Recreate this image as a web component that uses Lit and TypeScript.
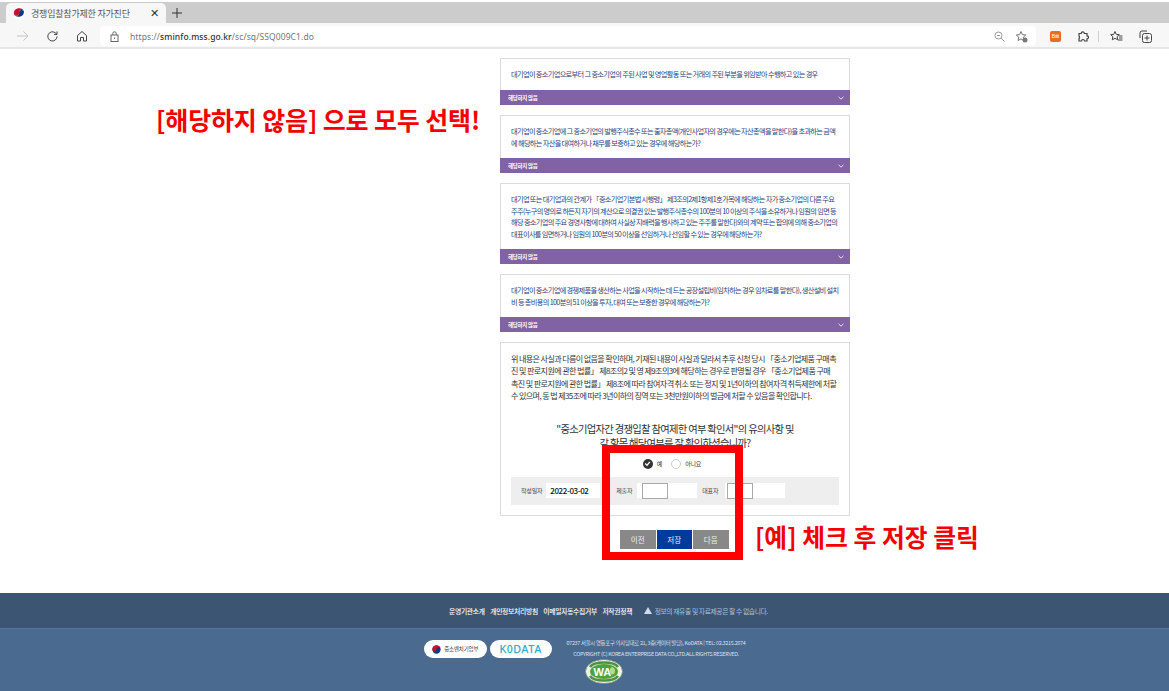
import { LitElement, html, css, svg } from "lit";
import { customElement } from "lit/decorators.js";

const QUESTIONS = [
  { lines: ["대기업이 중소기업으로부터 그 중소기업의 주된 사업 및 영업활동 또는 거래의 주된 부분을 위임받아 수행하고 있는 경우"], h: 31 },
  { lines: ["대기업이 중소기업에 그 중소기업의 발행주식총수 또는 출자총액(개인사업자의 경우에는 자산총액을 말한다)을 초과하는 금액", "에 해당하는 자산을 대여하거나 채무를 보증하고 있는 경우에 해당하는가?"], h: 42 },
  { lines: ["대기업 또는 대기업과의 관계가 「중소기업기본법 시행령」 제3조의2제1항제1호가목에 해당하는 자가 중소기업의 다른 주요", "주주(누구의 명의로 하든지 자기의 계산으로 의결권 있는 발행주식총수의 100분의 10 이상의 주식을 소유하거나 임원의 임면 등", "해당 중소기업의 주요 경영사항에 대하여 사실상 지배력을 행사하고 있는 주주를 말한다)와의 계약 또는 합의에 의해 중소기업의", "대표이사를 임면하거나 임원의 100분의 50 이상을 선임하거나 선임할 수 있는 경우에 해당하는가?"], h: 65 },
  { lines: ["대기업이 중소기업에 경쟁제품을 생산하는 사업을 시작하는 데 드는 공장설립비(임차하는 경우 임차료를 말한다), 생산설비 설치", "비 등 총비용의 100분의 51 이상을 투자, 대여 또는 보증한 경우에 해당하는가?"], h: 42 },
];

const NOTICE = [
  "위 내용은 사실과 다름이 없음을 확인하며, 기재된 내용이 사실과 달라서 추후 신청 당시 「중소기업제품 구매촉",
  "진 및 판로지원에 관한 법률」 제8조의2 및 영 제9조의3에 해당하는 경우로 판명될 경우 「중소기업제품 구매",
  "촉진 및 판로지원에 관한 법률」 제8조에 따라 참여자격 취소 또는 정지 및 1년이하의 참여자격 취득제한에 처할",
  "수 있으며, 동 법 제35조에 따라 3년이하의 징역 또는 3천만원이하의 벌금에 처할 수 있음을 확인합니다.",
];

const ico = (w: number, h: number, body: unknown) =>
  html`<svg width=${w} height=${h} viewBox="0 0 ${w} ${h}" fill="none" stroke="#444" stroke-width="1">${body}</svg>`;

@customElement("browser-bar")
class BrowserBar extends LitElement {
  static styles = css`
    :host { display: block; font-family: "Noto Sans CJK KR", "Noto Sans", sans-serif; }
    .strip { height: 21px; margin-top: 2px; background: #cccccc; display: flex; align-items: flex-end; padding-left: 6px; }
    .tab { width: 160px; height: 20px; background: #f7f7f7; border-radius: 5px 5px 0 0; display: flex; align-items: center; box-sizing: border-box; padding: 0 7px; }
    .title { flex: 1; margin-left: 6px; font-size: 9px; letter-spacing: -0.2px; color: #555; white-space: nowrap; }
    .close { font: 11px "Liberation Sans", sans-serif; color: #333; }
    .plus { width: 22px; height: 20px; display: flex; align-items: center; justify-content: center; }
    .tools { height: 26px; padding-top: 2px; box-sizing: border-box; background: #f7f7f7; border-bottom: 2px solid #e6e6e6; display: flex; align-items: center; }
    .nav { display: flex; align-items: center; width: 100px; padding-left: 16px; box-sizing: border-box; gap: 17px; }
    .addr { width: 936px; height: 20px; background: #fff; border-radius: 4px; display: flex; align-items: center; box-sizing: border-box; padding: 0 8px 0 10px; }
    .url { margin-left: 11px; flex: 1; font: 8.5px "Noto Sans", sans-serif; color: #777; letter-spacing: 0.1px; white-space: nowrap; }
    .url b { font-weight: 500; color: #333; }
    .right { display: flex; align-items: center; }
    .ext { width: 11px; height: 11px; background: #ef6c1e; border-radius: 2px; margin: 0 0 0 14px; color: #fff; font: 5px "Liberation Sans", sans-serif; display: flex; align-items: center; justify-content: center; }
    .sep { width: 1px; height: 11px; background: #cfcfcf; margin: 0 11px 0 9px; }
    .g16 { width: 16px; }
    .g10 { width: 10px; }
  `;
  render() {
    return html`
      <div class="strip">
        <div class="tab">
          ${ico(12, 12, svg`<circle cx="6" cy="6" r="6" fill="#fff" stroke="none"/><path d="M.8 6.500A5.300 5.300 0 0 1 11 4.500 2.600 2.600 0 0 0 6 5.500 2.600 2.600 0 0 1 .8 6.500Z" fill="#c8102e" stroke="none"/><path d="M.8 6.500A2.600 2.600 0 0 0 6 5.500 2.600 2.600 0 0 1 11 4.500 5.300 5.300 0 0 1 .8 6.500Z" fill="#0b3a82" stroke="none"/>`)}
          <span class="title">경쟁입찰참가제한 자가진단</span>
          <span class="close">✕</span>
        </div>
        <div class="plus">${ico(12, 12, svg`<path d="M6 1v10M1 6h10" stroke="#333"/>`)}</div>
      </div>
      <div class="tools">
        <div class="nav">
          ${ico(13, 12, svg`<path d="M1 6h11M7.500 1.500 12 6l-4.500 4.500" stroke="#c4c4c4"/>`)}
          ${ico(13, 13, svg`<path d="M11 6.500A4.600 4.600 0 1 1 9.500 3L11 4.400M11 1.400v3H8" stroke="#444"/>`)}
          ${ico(12, 12, svg`<path d="M1.500 5.500 6 1.500l4.500 4V11H7.500V7.500h-3V11h-3Z" stroke="#444"/>`)}
        </div>
        <div class="addr">
          ${ico(9, 11, svg`<rect x="1" y="4" width="7" height="6.500" stroke="#666"/><path d="M2.800 4V2.500a1.700 1.700 0 0 1 3.400 0V4M4.500 6.500v1.500" stroke="#666"/>`)}
          <span class="url">https://<b>sminfo.mss.go.kr</b>/sc/sq/SSQ009C1.do</span>
          <div class="right">
            ${ico(11, 11, svg`<circle cx="4.500" cy="4.500" r="3.500" stroke="#999"/><path d="M7 7l3.500 3.500M3 4.500h3" stroke="#999"/>`)}
            <span class="g10"></span>
            ${ico(13, 13, svg`<path d="M6 1.500 7.400 4.600l3.300.4-2.400 2.200.6 3.300L6 8.900l-2.900 1.600.6-3.300L1.300 5l3.300-.4Z" stroke="#555" stroke-width=".8"/><circle cx="10" cy="10" r="2.500" fill="#777" stroke="none"/>`)}
          </div>
        </div>
        <div class="right">
          <span class="ext">B⊠</span>
          <span class="g16"></span>
          ${ico(12, 12, svg`<path d="M2 3.500h2.200a1.600 1.600 0 0 1 3.200 0H10v2.300a1.500 1.500 0 0 1 0 3V11H7.500a1.500 1.500 0 0 0-3 0H2V8.500a1.700 1.700 0 0 0 0-2.500Z" stroke="#444" stroke-width="1.200"/>`)}
          <span class="sep"></span>
          ${ico(13, 12, svg`<path d="M5 1.500 6.300 4.400l3 .3-2.200 2 .6 3.100L5 8.300 2.300 9.800l.6-3.100-2.200-2 3-.3Z" stroke="#444"/><path d="M9 6h3.500M9 8h3.500M8 10h4.500" stroke="#444"/>`)}
          <span class="g16"></span>
          ${ico(13, 13, svg`<rect x="3.500" y="3.500" width="9" height="9" rx="2" stroke="#444"/><path d="M1 8V3a2 2 0 0 1 2-2h5M8 5.500v5M5.500 8h5" stroke="#444"/>`)}
        </div>
      </div>
    `;
  }
}

@customElement("app-root")
class AppRoot extends LitElement {
  static styles = css`
    :host { display: block; position: relative; width: 100%; height: 691px; overflow: hidden; background: #fff; font-family: "Noto Sans CJK KR", "Noto Sans", sans-serif; }
    .main { width: 350px; height: 544px; margin-left: 500px; padding-top: 9px; box-sizing: border-box; display: flex; flex-direction: column; gap: 10px; }
    .card { border: 1px solid #dcdcdc; box-sizing: border-box; background: #fff; }
    .q { box-sizing: border-box; padding: 10px 10px 0; font-size: 7.2px; line-height: 11.5px; letter-spacing: -0.65px; color: #1f3f7a; white-space: nowrap; }
    .sel { height: 15px; margin: 0 -1px -1px; background: #8163a5; color: #fff; font-size: 5.5px; font-weight: 700; letter-spacing: -0.3px; display: flex; align-items: center; justify-content: space-between; padding: 0 6px 0 8px; }
    .decl { flex: none; height: 174px; padding: 10px 10px 0; }
    .notice { font-size: 8.1px; line-height: 12.4px; letter-spacing: -0.64px; color: #333; white-space: nowrap; margin: 0; }
    h2 { margin: 19px 0 0; font-size: 10.3px; line-height: 14px; font-weight: 400; color: #333; text-align: center; letter-spacing: -0.7px; white-space: nowrap; }
    .radios { display: flex; justify-content: center; align-items: center; height: 14px; margin-top: 7px; font-size: 6px; letter-spacing: -0.2px; color: #333; gap: 4px; padding-right: 6px; }
    .dot { width: 10px; height: 10px; border-radius: 50%; box-sizing: border-box; display: flex; align-items: center; justify-content: center; }
    .dot.on { background: #333; }
    .dot.off { border: 1px solid #ccc; margin-left: 5px; }
    .form { height: 28px; margin-top: 6px; background: #eeeeee; display: flex; align-items: center; padding-left: 10px; font-size: 6px; color: #444; letter-spacing: -0.2px; }
    .f { height: 15px; background: #fff; box-sizing: border-box; display: flex; align-items: center; }
    .date { width: 54px; margin-left: 4px; padding-left: 4px; font-size: 8px; font-weight: 500; color: #111; letter-spacing: -0.4px; margin-right: 16px; }
    .who { width: 60px; margin: 0 5px; padding-left: 5px; }
    .who.b { margin: 0 0 0 7px; padding-left: 2px; }
    .inner { width: 26px; height: 16px; border: 1px solid #a9a9a9; box-sizing: border-box; background: #fff; }
    .btns { display: flex; gap: 1px; margin: 4px 0 0 120px; }
    .btn { width: 35.500px; height: 19px; background: #888; color: #eee; font-size: 7.500px; display: flex; align-items: center; justify-content: center; letter-spacing: 0.2px; }
    .btn.save { background: #003a9c; }
    .foot1 { height: 35px; background: #3b5573; display: flex; align-items: center; padding-left: 449px; color: #fff; font-size: 6.800px; font-weight: 500; letter-spacing: -0.3px; box-sizing: border-box; }
    .foot1 a { margin-right: 5.500px; white-space: nowrap; }
    .warn { margin-left: 6px; display: flex; align-items: center; gap: 3px; color: #a4c2dc; font-weight: 400; letter-spacing: -0.42px; }
    .foot2 { height: 63px; background: #4b6a90; border-top: 1px solid #57749a; box-sizing: border-box; padding: 11px 0 0 424px; }
    .row { display: flex; gap: 3px; align-items: flex-start; height: 18px; }
    .pill { width: 62.500px; height: 18px; border-radius: 9px; background: #fff; display: flex; align-items: center; justify-content: center; gap: 3px; font-size: 5.500px; letter-spacing: -0.2px; color: #444; }
    .kd { color: #2aa9c8; font: 400 10px "Liberation Sans", sans-serif; letter-spacing: 0.8px; -webkit-text-stroke: 0.25px #2aa9c8; }
    .addr { width: 190px; margin-left: 6px; margin-top: -2px; color: #d5e0ec; font-size: 5.400px; line-height: 10.500px; text-align: center; letter-spacing: -0.28px; white-space: nowrap; }
    .wa { display: block; margin-left: 161px; }
    .note { position: absolute; color: #f40000; font-weight: 700; white-space: nowrap; margin: 0; }
    .n1 { left: 156px; top: 102px; font-size: 25px; line-height: 34px; letter-spacing: -0.15px; }
    .n2 { left: 755px; top: 519px; font-size: 24.800px; line-height: 34px; }
    .box { position: absolute; left: 602px; top: 445px; width: 141px; height: 115px; border: 8px solid #ff0000; box-sizing: border-box; }
  `;
  render() {
    return html`
      <browser-bar></browser-bar>
      <div class="main">
        ${QUESTIONS.map((q) => html`
          <div class="card">
            <div class="q" style="height:${q.h}px">${q.lines.map((l) => html`${l}<br>`)}</div>
            <div class="sel"><span>해당하지 않음</span>
              <svg width="6" height="4" viewBox="0 0 6 4" fill="none" stroke="#e8e0f0" stroke-width="1"><path d="M.5.800 3 3.200 5.500.800"/></svg>
            </div>
          </div>`)}
        <div class="card decl">
          <p class="notice">${NOTICE.map((l) => html`${l}<br>`)}</p>
          <h2>"중소기업자간 경쟁입찰 참여제한 여부 확인서"의 유의사항 및<br>각 항목 해당여부를 잘 확인하셨습니까?</h2>
          <div class="radios">
            <span class="dot on"><svg width="7" height="7" viewBox="0 0 7 7" fill="none" stroke="#fff" stroke-width="1.300"><path d="M1.200 3.500 3 5.200 5.900 1.800"/></svg></span><span>예</span>
            <span class="dot off"></span><span>아니요</span>
          </div>
          <div class="form">
            <span>작성일자</span>
            <div class="f date">2022-03-02</div>
            <span>제출자</span>
            <div class="f who"><div class="inner"></div></div>
            <span>대표자</span>
            <div class="f who b"><div class="inner"></div></div>
          </div>
        </div>
        <div class="btns">
          <div class="btn">이전</div><div class="btn save">저장</div><div class="btn">다음</div>
        </div>
      </div>
      <div class="foot1">
        <a>운영기관소개</a><a>개인정보처리방침</a><a>이메일자동수집거부</a><a>저작권정책</a>
        <span class="warn"><svg width="8" height="7" viewBox="0 0 8 7"><path d="M4 0 8 7H0Z" fill="#cfdbe6"/></svg>정보의 재유출 및 자료제공은 할 수 없습니다.</span>
      </div>
      <div class="foot2">
        <div class="row">
          <div class="pill">
            <svg width="9" height="9" viewBox="0 0 12 12"><circle cx="6" cy="6" r="5.500" fill="#0b3a82"/><path d="M.5 6.500A5.500 5.500 0 0 1 11.500 5 2.800 2.800 0 0 0 6 5.500 2.800 2.800 0 0 1 .5 6.500Z" fill="#c8102e"/></svg>
            <span>중소벤처기업부</span>
          </div>
          <div class="pill"><span class="kd">K0DATA</span></div>
          <div class="addr">
            07237 서울시 영등포구 의사당대로 21, 3층(케이터 빌딩), KoDATA | TEL: 02.3215.2674<br>
            COPYRIGHT (C) KOREA ENTERPRISE DATA CO.,LTD.ALL RIGHTS RESERVED.
          </div>
        </div>
        <svg class="wa" width="38" height="26" viewBox="0 0 38 26">
          <ellipse cx="19" cy="13.500" rx="18.500" ry="12" fill="#eef1e4" stroke="#5c8a50" stroke-width=".6"/>
          <path d="M5 9C9 3 29 3 33 9" stroke="#4f9140" stroke-width="2.500" fill="none"/>
          <path d="M5 18C9 24 29 24 33 18" stroke="#4f9140" stroke-width="2.500" fill="none"/>
          <ellipse cx="19" cy="13.500" rx="14" ry="7.500" fill="#4fa33f"/>
          <text x="8.500" y="17.500" font-family="Liberation Sans, sans-serif" font-weight="700" font-size="11" fill="#fff">WA</text>
          <path d="M27 9c3 1 4 4 2 7-2 1-4 0-5-2 1-3 1-4 3-5Z" fill="#b9d98a"/>
        </svg>
      </div>
      <p class="note n1">[해당하지 않음] 으로 모두 선택!</p>
      <p class="note n2">[예] 체크 후 저장 클릭</p>
      <div class="box"></div>
    `;
  }
}
